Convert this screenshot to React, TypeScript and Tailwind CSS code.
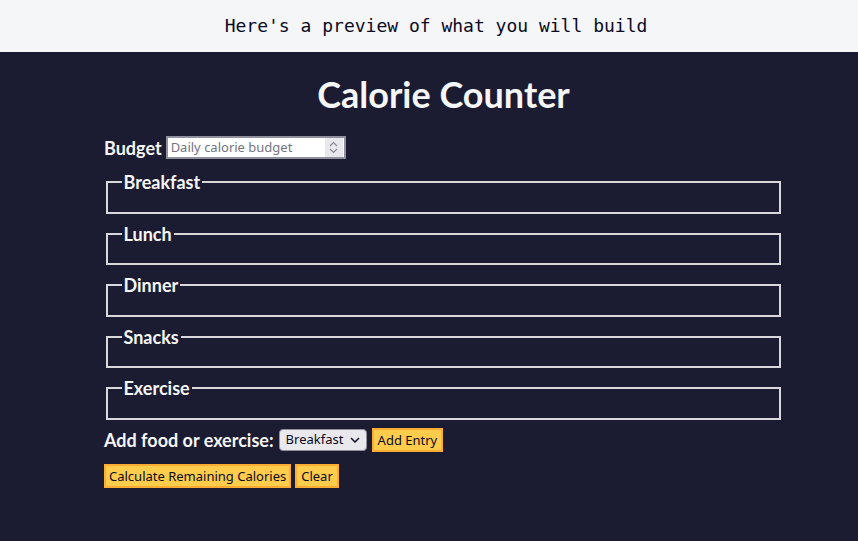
const sections = ['Breakfast', 'Lunch', 'Dinner', 'Snacks', 'Exercise'];

const lato = { fontFamily: 'Lato, sans-serif' };

function Spinner() {
  return (
    <div className="flex h-[19px] w-[18px] flex-col items-center justify-center gap-[1px] bg-[#e9e9ed]">
      <svg width="9" height="6" viewBox="0 0 9 6" fill="none">
        <path d="M1 5 L4.5 1.5 L8 5" stroke="#8a8a96" strokeWidth="1.2" />
      </svg>
      <svg width="9" height="6" viewBox="0 0 9 6" fill="none">
        <path d="M1 1 L4.5 4.5 L8 1" stroke="#8a8a96" strokeWidth="1.2" />
      </svg>
    </div>
  );
}

export default function App() {
  return (
    <div className="min-h-[541px] bg-[#1b1b32] text-[#f5f6f7]">
      {/* preview banner */}
      <div className="flex h-[52px] items-center justify-center bg-[#f5f6f7] pb-[2px] pl-[14px] font-['DejaVu_Sans_Mono',monospace] text-[18px] text-[#0a0a23]">
        Here's a preview of what you will build
      </div>

      <div className="ml-[104px] w-[679px]" style={lato}>
        <h1 className="mt-[21px] text-center text-[36px] leading-[42px] font-bold">
          Calorie Counter
        </h1>

        <form className="mt-[21px]">
          <div className="flex items-center gap-[4px]">
            <label className="text-[18px] leading-[22px] font-bold">Budget</label>
            <div className="flex h-[23px] w-[180px] items-center border-2 border-[#8f8f9d] bg-white pr-[1px]">
              <input
                type="text"
                placeholder="Daily calorie budget"
                className="w-0 flex-1 bg-transparent pl-[3px] font-['Noto_Sans',sans-serif] text-[13px] text-[#0a0a23] outline-none placeholder:text-[#75757f]"
              />
              <Spinner />
            </div>
          </div>

          <div className="mt-[12px] flex flex-col gap-[9px]">
            {sections.map((name) => (
              <fieldset
                key={name}
                className="mx-[2px] h-[42.5px] border-2 border-[#d8d8dc] px-[13.5px] pt-[6px] pb-[11px]"
              >
                <legend className="px-[2px] text-[18px] leading-[22px] font-bold">{name}</legend>
              </fieldset>
            ))}
          </div>

          <div className="mt-[8.5px] flex items-center">
            <label className="text-[18px] leading-[22px] font-bold">Add food or exercise:</label>
            <div className="ml-[5px] flex h-[22px] w-[88px] items-center justify-between rounded-[4px] border border-[#8f8f9d] bg-[#e9e9ed] pr-[6px] pl-[6px] font-['Noto_Sans',sans-serif] text-[13px] text-[#0a0a23]">
              <span>Breakfast</span>
              <svg width="10" height="6" viewBox="0 0 10 6" fill="none">
                <path d="M1 1 L5 5 L9 1" stroke="#0a0a23" strokeWidth="1.5" />
              </svg>
            </div>
            <button
              type="button"
              className="ml-[5px] h-[24px] border-2 border-[#feac32] bg-[#ffcc4c] px-[4px] font-['Noto_Sans',sans-serif] text-[13px] leading-none text-[#0a0a23]"
            >
              Add Entry
            </button>
          </div>

          <div className="mt-[12px] flex items-center gap-[4px] font-['Noto_Sans',sans-serif] text-[13px] text-[#0a0a23]">
            <button type="button" className="h-[24px] border-2 border-[#feac32] bg-[#ffcc4c] px-[3px] leading-none">
              Calculate Remaining Calories
            </button>
            <button type="button" className="h-[24px] border-2 border-[#feac32] bg-[#ffcc4c] px-[4px] leading-none">
              Clear
            </button>
          </div>
        </form>
      </div>
    </div>
  );
}
